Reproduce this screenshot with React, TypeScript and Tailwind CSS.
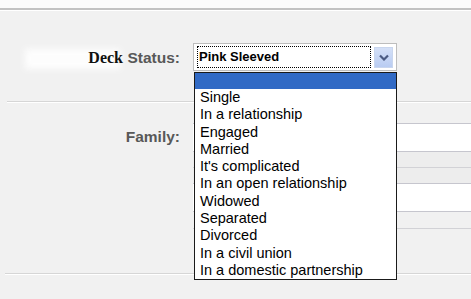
const options = [
  'Single',
  'In a relationship',
  'Engaged',
  'Married',
  "It's complicated",
  'In an open relationship',
  'Widowed',
  'Separated',
  'Divorced',
  'In a civil union',
  'In a domestic partnership',
];

export default function App() {
  return (
    <div className="relative w-[471px] h-[299px] overflow-hidden bg-[#f1f1f1] font-['Liberation_Sans',Arial,sans-serif]">
      {/* top strip */}
      <div className="h-[8px] bg-[#fbfbfb]" />
      <div className="h-[2px] bg-[#c2c2c2]" />
      <div className="h-px bg-white" />

      {/* smudge left of the label */}
      <div className="absolute left-[25px] top-[49px] w-[95px] h-[20px] bg-white blur-[3px] opacity-90" />

      {/* Deck Status row */}
      <div className="relative flex pt-[32px]">
        <div className="w-[180px] mt-[5px] text-right leading-[20px] whitespace-nowrap">
          <span className="font-['Liberation_Serif',serif] font-bold text-[16px] text-[#111]">Deck</span>{' '}
          <span className="font-bold text-[15.5px] text-[#585858]">Status:</span>
        </div>
        <div className="ml-[13px] w-[204px] h-[28px] border border-[#bdbdbd] bg-white flex items-center pl-[3px] pr-[3px] gap-[3px]">
          <div className="flex-1 h-[22px] border border-dotted border-black flex items-center pl-[1px]">
            <span className="font-bold text-[13px] text-black">Pink Sleeved</span>
          </div>
          <div className="w-[19px] h-[21px] bg-gradient-to-b from-[#d4e0f7] to-[#b9ccf2] border border-[#c9d6ee] flex items-center justify-center">
            <svg width="10" height="7" viewBox="0 0 10 7">
              <path d="M1 1.5 L5 5.5 L9 1.5" fill="none" stroke="#4b5b82" strokeWidth="2.2" />
            </svg>
          </div>
        </div>
      </div>

      {/* separator */}
      <div className="mt-[30px] ml-[7px]">
        <div className="h-px bg-[#d6d6d6]" />
        <div className="h-px bg-white" />
      </div>

      {/* Family row */}
      <div className="flex h-[170px]">
        <div className="w-[180px] pt-[25px] text-right leading-[18px] font-bold text-[15.5px] text-[#585858]">
          Family:
        </div>
        <div className="ml-[13px] flex-1 pt-[20px]">
          <div className="h-[29px] bg-white border-y border-[#c6c6ce]" />
          <div className="h-[31px] bg-[#ededed] flex flex-col justify-center">
            <div className="h-px bg-[#d2d2d6]" />
          </div>
          <div className="h-[29px] bg-white border-y border-[#c6c6ce]" />
          <div className="h-[16px]" />
          <div className="h-px bg-[#d2d2d6]" />
        </div>
      </div>

      {/* bottom separator */}
      <div className="ml-[5px]">
        <div className="h-px bg-[#d6d6d6]" />
        <div className="h-px bg-white" />
      </div>

      {/* open dropdown list */}
      <div className="absolute left-[194px] top-[72px] w-[203px] border border-[#1a1a1a] bg-white">
        <div className="h-[16px] bg-[#316ac5]" />
        {options.map((o) => (
          <div key={o} className="h-[17.3px] leading-[17.3px] pl-[5px] text-[14.5px] text-black whitespace-nowrap">
            {o}
          </div>
        ))}
      </div>
    </div>
  );
}
